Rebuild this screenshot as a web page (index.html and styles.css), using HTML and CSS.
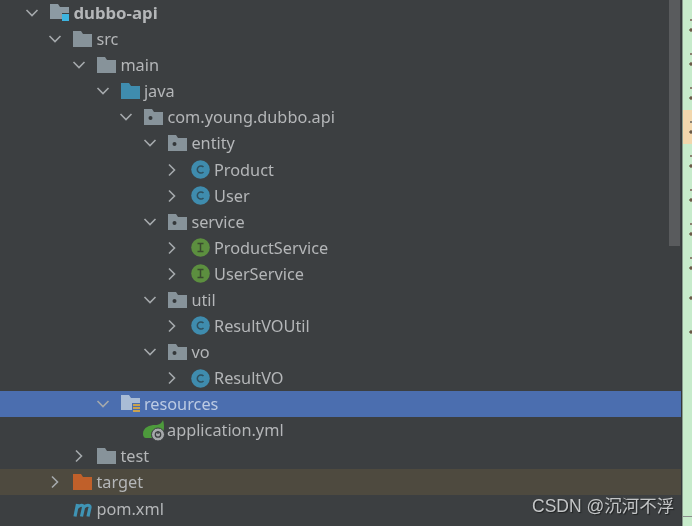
FILE: index.html
```html
<!DOCTYPE html>
<html lang="en">
<head>
<meta charset="utf-8">
<title>dubbo-api project tree</title>
<link rel="stylesheet" href="styles.css">
</head>
<body>
<svg class="defs" width="0" height="0" aria-hidden="true">
  <defs>
    <symbol id="down" viewBox="0 0 14 14"><path d="M1.5 4 7 9.5 12.5 4" fill="none" stroke="currentColor" stroke-width="1.6"/></symbol>
    <symbol id="right" viewBox="0 0 14 14"><path d="M4 1.500 9.500 7 4 12.500" fill="none" stroke="currentColor" stroke-width="1.6"/></symbol>
    <symbol id="folder" viewBox="0 0 19 16"><path d="M0 0h8l2 3h9v13H0z" fill="currentColor"/></symbol>
    <symbol id="pkg" viewBox="0 0 19 16"><path d="M0 0h8l2 3h9v13H0z" fill="currentColor"/><circle cx="6.500" cy="9" r="2" fill="#34383a"/></symbol>
    <symbol id="cls" viewBox="0 0 19 19"><circle cx="9.500" cy="9.500" r="9.300" fill="#3f8cae"/><path d="M12.500 7a3.600 3.600 0 1 0 0 5" fill="none" stroke="#2f4f5d" stroke-width="1.500"/></symbol>
    <symbol id="ifc" viewBox="0 0 19 19"><circle cx="9.500" cy="9.500" r="9.300" fill="#5c8f3f"/><path d="M6.500 5.500h6M6.500 13.500h6M9.500 5.500v8" fill="none" stroke="#394a2e" stroke-width="1.500"/></symbol>
  </defs>
</svg>
<main class="window">
  <div class="tree">
    <div class="row l0"><svg class="chev"><use href="#down"/></svg>
      <svg class="icon" viewBox="0 0 19 20"><path d="M0 1h8l2 3h9v12H0z" fill="#8c9aa3"/><rect x="12" y="10" width="8" height="8" fill="#3c3f41"/><rect x="12" y="11" width="7" height="7" fill="#3db4e0"/></svg>
      <span class="label bold">dubbo-api</span></div>
    <div class="row l1"><svg class="chev"><use href="#down"/></svg><svg class="icon grey"><use href="#folder"/></svg><span class="label">src</span></div>
    <div class="row l2"><svg class="chev"><use href="#down"/></svg><svg class="icon grey"><use href="#folder"/></svg><span class="label">main</span></div>
    <div class="row l3"><svg class="chev"><use href="#down"/></svg><svg class="icon teal"><use href="#folder"/></svg><span class="label">java</span></div>
    <div class="row l4"><svg class="chev"><use href="#down"/></svg><svg class="icon grey"><use href="#pkg"/></svg><span class="label">com.young.dubbo.api</span></div>
    <div class="row l5"><svg class="chev"><use href="#down"/></svg><svg class="icon grey"><use href="#pkg"/></svg><span class="label">entity</span></div>
    <div class="row l6"><svg class="chev"><use href="#right"/></svg><svg class="icon round"><use href="#cls"/></svg><span class="label">Product</span></div>
    <div class="row l6"><svg class="chev"><use href="#right"/></svg><svg class="icon round"><use href="#cls"/></svg><span class="label">User</span></div>
    <div class="row l5"><svg class="chev"><use href="#down"/></svg><svg class="icon grey"><use href="#pkg"/></svg><span class="label">service</span></div>
    <div class="row l6"><svg class="chev"><use href="#right"/></svg><svg class="icon round"><use href="#ifc"/></svg><span class="label">ProductService</span></div>
    <div class="row l6"><svg class="chev"><use href="#right"/></svg><svg class="icon round"><use href="#ifc"/></svg><span class="label">UserService</span></div>
    <div class="row l5"><svg class="chev"><use href="#down"/></svg><svg class="icon grey"><use href="#pkg"/></svg><span class="label">util</span></div>
    <div class="row l6"><svg class="chev"><use href="#right"/></svg><svg class="icon round"><use href="#cls"/></svg><span class="label">ResultVOUtil</span></div>
    <div class="row l5"><svg class="chev"><use href="#down"/></svg><svg class="icon grey"><use href="#pkg"/></svg><span class="label">vo</span></div>
    <div class="row l6"><svg class="chev"><use href="#right"/></svg><svg class="icon round"><use href="#cls"/></svg><span class="label">ResultVO</span></div>
    <div class="row l3 selected"><svg class="chev"><use href="#down"/></svg>
      <svg class="icon" viewBox="0 0 19 20"><path d="M0 1h8l2 3h9v12H0z" fill="#a9bcd6"/><rect x="11" y="9" width="9" height="11" fill="#4b6eaf"/><path d="M12 11h8M12 14h8M12 17h8" stroke="#c9a24f" stroke-width="2"/></svg>
      <span class="label">resources</span></div>
    <div class="row l4 leaf"><svg class="chev"></svg>
      <svg class="icon wide" viewBox="0 0 22 22"><path d="M0 15C0 8 7 6 12 6c4 0 7-2 8-5 2 7 1 13-3 18H3C1 19 0 17 0 15z" fill="#4d9a3c"/><circle cx="15" cy="15.500" r="6.500" fill="#a5a8aa" stroke="#3c3f41"/><circle cx="15" cy="15.500" r="2.700" fill="none" stroke="#3c3f41" stroke-width="1.300"/><path d="M15 12v3" stroke="#3c3f41" stroke-width="1.300"/></svg>
      <span class="label">application.yml</span></div>
    <div class="row l2"><svg class="chev"><use href="#right"/></svg><svg class="icon grey"><use href="#folder"/></svg><span class="label">test</span></div>
    <div class="row l1 excluded"><svg class="chev"><use href="#right"/></svg><svg class="icon orange"><use href="#folder"/></svg><span class="label">target</span></div>
    <div class="row l1 leaf"><svg class="chev"></svg>
      <svg class="icon pom" viewBox="0 0 19 16"><path d="M2 15.500 4.500 3M4.300 6.500C7 3.500 10.500 3.500 10.500 6.500L8.500 15.500M10.500 6.500C13 3.500 17.500 3.500 17 6.500L15 15.500" fill="none" stroke="#3f94b5" stroke-width="3.200"/></svg>
      <span class="label">pom.xml</span></div>
  </div>
  <aside class="gutter"><div class="marks"></div></aside>
  <div class="scrollbar"></div>
  <div class="watermark">CSDN @沉河不浮</div>
</main>
</body>
</html>
```
FILE: styles.css
```css
* { box-sizing: border-box; }
html, body { margin: 0; height: 100%; overflow: hidden; background: #3c3f41; }
.defs { position: absolute; }
.window {
  position: relative;
  display: flex;
  width: 692px;
  height: 526px;
  overflow: hidden;
  font-family: "Noto Sans", sans-serif;
  font-size: 16.300px;
  color: #b4b6b8;
  filter: blur(0.35px);
}
.tree { flex: 1; min-width: 0; border-right: 1px solid #34383a; }
.row {
  display: flex;
  align-items: center;
  height: 26.090px;
  white-space: nowrap;
}
.l0 { padding-left: 25px; }
.l1 { padding-left: 48px; }
.l2 { padding-left: 72px; }
.l3 { padding-left: 95.500px; }
.l4 { padding-left: 119px; }
.l5 { padding-left: 143px; }
.l6 { padding-left: 165px; }
.chev { width: 14px; height: 14px; margin-right: 11px; flex: none; color: #a5a9ac; }
.icon { width: 19px; height: 20px; margin-right: 4.400px; flex: none; }
.grey { height: 16px; color: #87939a; }
.teal { height: 16px; color: #3f8cae; }
.orange { height: 16px; color: #c0602a; }
.round { height: 19px; margin-left: 1px; margin-right: 4px; }
.wide { width: 22px; height: 22px; margin-left: -1px; margin-right: 2px; }
.pom { height: 16px; }
.label { line-height: 26px; }
.bold { font-weight: 700; font-size: 16.800px; }
.selected { background: #4b6eaf; color: #bccbe3; }
.excluded { background: #4e4a3f; }
.gutter {
  flex: none;
  width: 10px;
  height: 100%;
  border-left: 1px solid #8a9c8e;
  background-color: #c7ebcb;
  background-image:
    linear-gradient(#8a8f8c, #8a8f8c),
    radial-gradient(circle at 8px 3px, #6b5a48 1.400px, transparent 1.900px),
    radial-gradient(circle at 8px 3px, #6b5a48 1.400px, transparent 1.900px),
    linear-gradient(#f2d7ad, #f2d7ad);
  background-size: 100% 1px, 10px 6px, 10px 6px, 100% 34px;
  background-position: 0 516px, 0 295px, 0 329px, 0 110px;
  background-repeat: no-repeat;
}
.marks {
  height: 272px;
  background-image:
    radial-gradient(circle at 8px 3px, #6b5a48 1.400px, transparent 1.900px),
    radial-gradient(circle at 8px 3px, #8a8070 1px, transparent 1.500px);
  background-size: 10px 34px;
  background-position: 0 27px, 0 17px;
  background-repeat: repeat-y;
}
.scrollbar {
  position: absolute;
  left: 669px;
  top: 0;
  width: 11px;
  height: 246px;
  background: #595b5d;
}
.watermark {
  position: absolute;
  left: 532px;
  top: 494px;
  font-family: "Liberation Sans", "Noto Sans CJK SC", sans-serif;
  font-size: 17.500px;
  line-height: 24px;
  color: #c4c6c7;
  text-shadow: 1px 1px 1px #1f2122;
  white-space: nowrap;
}
```
